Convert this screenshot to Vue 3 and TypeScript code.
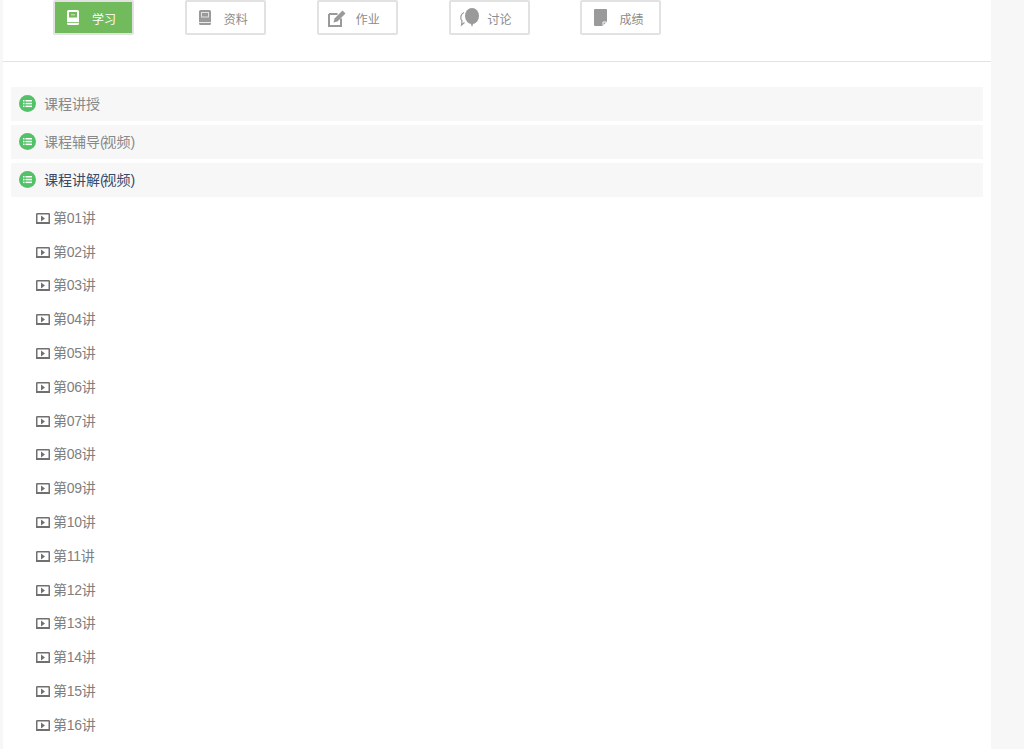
<script setup lang="ts">
const tabs = [
  { name: '学习', icon: 'book', active: true },
  { name: '资料', icon: 'book', active: false },
  { name: '作业', icon: 'edit', active: false },
  { name: '讨论', icon: 'chat', active: false },
  { name: '成绩', icon: 'page', active: false }
]

const sections = [
  { title: '课程讲授', note: '', open: false },
  { title: '课程辅导', note: '视频', open: false },
  { title: '课程讲解', note: '视频', open: true }
]

const lessons = Array.from({ length: 16 }, (_, i) => `第${String(i + 1).padStart(2, '0')}讲`)
</script>

<template>
  <div class="page">
    <div class="container">
      <ul class="tabs">
        <li v-for="tab in tabs" :key="tab.name" class="tab" :class="{ active: tab.active }">
          <span class="tab-icon">
            <svg v-if="tab.icon === 'book'" width="12" height="15" viewBox="0 0 12 15">
              <path d="M1.500 0h9A1.500 1.500 0 0 1 12 1.500v12a1.500 1.500 0 0 1-1.500 1.500h-9A1.500 1.500 0 0 1 0 13.500v-12A1.500 1.500 0 0 1 1.500 0z" fill="currentColor" />
              <rect class="cut" x="2.500" y="2.500" width="7" height="4.500" stroke-width="1" />
              <rect class="cut-bar" x="4" y="4.300" width="4" height="1" />
              <rect class="cut-line" x="0" y="12" width="12" height="0.800" />
            </svg>
            <svg v-else-if="tab.icon === 'edit'" width="18" height="18" viewBox="0 0 18 18">
              <path d="M1 5h8.500M1 5v12h12V9.500" fill="none" stroke="currentColor" stroke-width="2" />
              <path d="M6.500 9.500L14.500 1.500l3 3-8 8-4 1z" fill="currentColor" />
            </svg>
            <svg v-else-if="tab.icon === 'chat'" width="20" height="19" viewBox="0 0 20 19">
              <ellipse cx="13" cy="8" rx="7" ry="8" fill="currentColor" />
              <path d="M11.500 15h3L13 19z" fill="currentColor" />
              <path d="M5 4.500A5.500 5.500 0 0 0 3 13l-.5 4 3-2.500" fill="none" stroke="currentColor" stroke-width="1.200" />
            </svg>
            <svg v-else width="13" height="17" viewBox="0 0 13 17">
              <path d="M1 0h11a1 1 0 0 1 1 1v11.500L8.500 17H1a1 1 0 0 1-1-1V1a1 1 0 0 1 1-1z" fill="currentColor" />
              <path class="page-fold" d="M9 16.500v-3.500h3.500" fill="none" stroke-width="1" />
            </svg>
          </span>
          <span class="tab-name">{{ tab.name }}</span>
        </li>
      </ul>

      <div class="sections">
        <template v-for="section in sections" :key="section.title">
          <div class="section-head" :class="{ open: section.open }">
            <svg class="list-icon" width="17" height="17" viewBox="0 0 17 17">
              <circle cx="8.500" cy="8.500" r="8.500" fill="#52c168" />
              <g fill="#fff">
                <rect x="4" y="5" width="1.500" height="1.500" />
                <rect x="4" y="7.800" width="1.500" height="1.500" />
                <rect x="4" y="10.600" width="1.500" height="1.500" />
                <rect x="6.500" y="5" width="6.500" height="1.500" />
                <rect x="6.500" y="7.800" width="6.500" height="1.500" />
                <rect x="6.500" y="10.600" width="6.500" height="1.500" />
              </g>
            </svg>
            <span class="section-title">{{ section.title }}<template v-if="section.note"><span class="paren">(</span>{{ section.note }}<span class="paren">)</span></template></span>
          </div>
          <ul v-if="section.open" class="lessons">
            <li v-for="lesson in lessons" :key="lesson" class="lesson">
              <svg class="play-icon" width="14" height="11" viewBox="0 0 14 11">
                <rect x="0.750" y="0.750" width="12.500" height="9.500" rx="0.500" fill="none" stroke="#707070" stroke-width="1.500" />
                <rect x="0" y="9" width="14" height="2" fill="#707070" />
                <path d="M5 2.500l4 3-4 3z" fill="#707070" />
              </svg>
              <span class="lesson-name">{{ lesson }}</span>
            </li>
          </ul>
        </template>
      </div>
    </div>
  </div>
</template>

<style>
html, body {
  margin: 0;
  height: 100%;
  overflow: hidden;
  background: #f7f7f7;
}
</style>

<style scoped>
.page {
  height: 749px;
  overflow: hidden;
  padding-left: 3px;
  font-family: "Liberation Sans", "Noto Sans CJK SC", sans-serif;
}

.container {
  width: 988px;
  height: 749px;
  background: #fff;
}

.tabs {
  list-style: none;
  margin: 0;
  padding: 0 0 26px 50px;
  height: 35px;
  display: flex;
  gap: 50.850px;
  border-bottom: 1px solid #e2e2e2;
}

.tab {
  box-sizing: border-box;
  width: 81px;
  height: 35px;
  border: 2px solid #e2e2e2;
  border-radius: 2px;
  display: flex;
  align-items: center;
  color: #9a9a9a;
  background: #fff;
}

.tab.active {
  background: #72bb5c;
  color: #fff;
}

.tab-icon {
  width: 36px;
  flex-shrink: 0;
  display: flex;
  justify-content: center;
}

.tab-name {
  font-size: 12px;
  margin: 2px 0 0 1px;
  color: #8c8c8c;
}

.tab.active .tab-name {
  color: #fff;
}

.cut {
  fill: #9a9a9a;
  stroke: #e0e0e0;
}

.cut-bar {
  fill: #9a9a9a;
}

.cut-line {
  fill: #fff;
}

.active .cut {
  fill: #72bb5c;
  stroke: #72bb5c;
}

.active .cut-bar {
  fill: #cfe8c6;
}

.active .cut-line {
  fill: #72bb5c;
}

.page-fold {
  stroke: #fff;
}

.sections {
  padding: 25px 8px 0;
  display: flex;
  flex-direction: column;
  gap: 4px;
}

.section-head {
  height: 34px;
  background: #f7f7f7;
  display: flex;
  align-items: center;
  padding-left: 8px;
  gap: 8px;
  font-size: 14px;
  color: #888;
}

.section-head.open {
  color: #3a4a66;
}

.section-title {
  margin-top: -2px;
}

.paren {
  letter-spacing: -2.100px;
}

.list-icon {
  flex-shrink: 0;
  margin-top: -2px;
}

.lessons {
  list-style: none;
  margin: 0;
  padding: 0 0 0 25px;
}

.lesson {
  height: 33.800px;
  display: flex;
  align-items: center;
  gap: 3px;
  font-size: 14px;
  color: #808080;
}

.lesson-name {
  margin-top: -2px;
  letter-spacing: -0.300px;
}

.play-icon {
  margin-top: 1px;
}
</style>
